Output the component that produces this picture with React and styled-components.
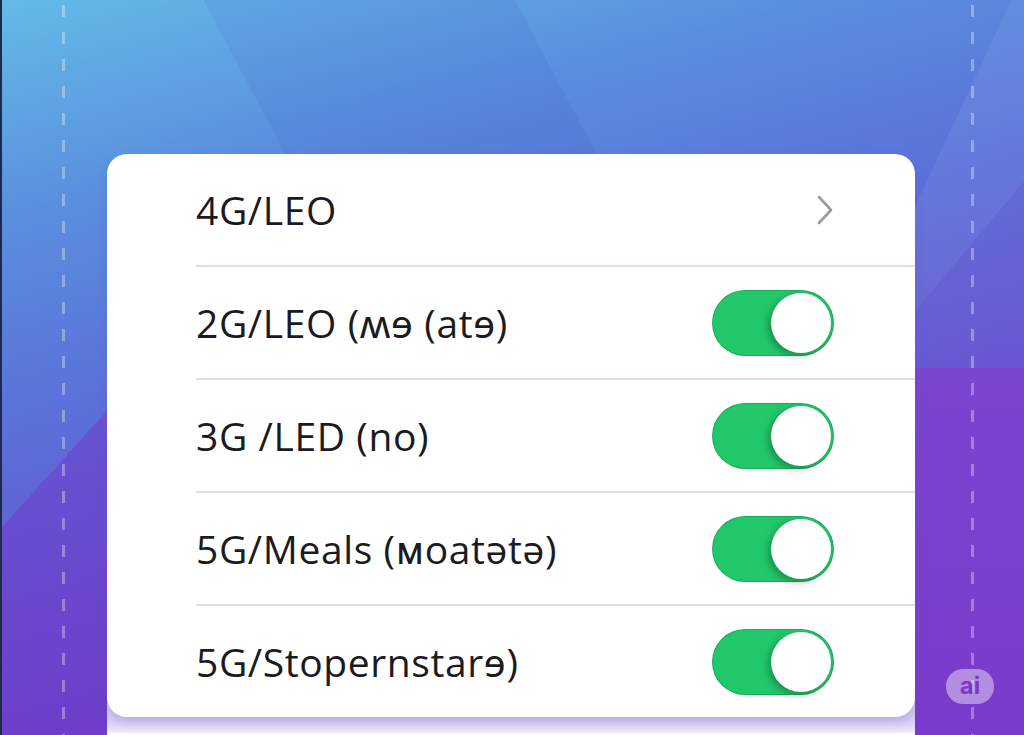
import React from 'react';
import styled, { createGlobalStyle } from 'styled-components';

const GlobalStyle = createGlobalStyle`
  html, body {
    margin: 0;
    padding: 0;
    overflow: hidden;
  }
  body {
    font-family: "Open Sans", "Noto Sans", "DejaVu Sans", sans-serif;
  }
`;

// dashed guide lines + faceted gradient all live in the page background
const Page = styled.div`
  width: 1024px;
  height: 735px;
  box-sizing: border-box;
  padding: 154px 109px 0 107px;
  display: flex;
  flex-direction: column;
  position: relative;
  overflow: hidden;
  background-color: #6360d6;
  background-origin: border-box;
  background-image:
    linear-gradient(to bottom, rgba(255, 255, 255, 0.32) 12px, transparent 12px),
    linear-gradient(to bottom, rgba(255, 255, 255, 0.32) 12px, transparent 12px),
    linear-gradient(to bottom, transparent 368px, #7a45d0 368px, #7a3acb 100%),
    linear-gradient(130deg, transparent 36%, rgba(80, 60, 200, 0.18) 36%),
    linear-gradient(132deg, transparent 62%, rgba(112, 52, 200, 0.45) 62%),
    linear-gradient(115deg, transparent 74%, rgba(255, 255, 255, 0.06) 74%),
    linear-gradient(62deg, transparent 42%, rgba(40, 40, 170, 0.07) 42%, rgba(40, 40, 170, 0.07) 64%, transparent 64%),
    linear-gradient(165deg, #63bbe7 0%, #5a8edd 22%, #5a74da 40%, #6555d2 62%, #7138c8 85%, #7630c4 100%);
  background-size:
    3px 27px,
    3px 27px,
    109px 100%,
    109px 100%,
    107px 100%,
    100% 100%,
    100% 100%,
    100% 100%;
  background-position:
    62px 5px,
    971px 5px,
    right top,
    right top,
    left top,
    0 0,
    0 0,
    0 0;
  background-repeat:
    repeat-y,
    repeat-y,
    no-repeat,
    no-repeat,
    no-repeat,
    no-repeat,
    no-repeat,
    no-repeat;
  border-left: 2px solid #1d2a4a;
`;

const Stack = styled.div`
  flex: 1;
  margin-left: -2px;
  background: linear-gradient(
    to bottom,
    transparent 540px,
    #cdc4ee 540px,
    #d8d1f3 566px,
    #ebe7fa 578px,
    #fbfaff 579px
  );
`;

const Card = styled.div`
  background: #ffffff;
  border-radius: 20px;
  box-shadow: 0 6px 10px rgba(110, 80, 200, 0.25);
  overflow: hidden;
`;

const Row = styled.div`
  display: flex;
  align-items: center;
  justify-content: space-between;
  height: 111px;
  margin-left: 89px;
  padding-right: 81px;
  border-bottom: 2px solid #dfdcec;
  ${p => p.$last && 'border-bottom: none;'}
`;

const Label = styled.span`
  font-family: "Open Sans", "Noto Sans", sans-serif;
  font-size: 39px;
  letter-spacing: 0.6px;
  color: #1b1b1f;
  white-space: pre;
`;

const Chevron = styled.svg`
  width: 18px;
  height: 30px;
`;

const Switch = styled.div`
  width: 122px;
  height: 66px;
  box-sizing: border-box;
  border-radius: 33px;
  background: ${p => (p.$on ? '#22c76a' : '#d9d9de')};
  border: 1px solid rgba(20, 150, 80, 0.6);
  display: flex;
  align-items: center;
  justify-content: ${p => (p.$on ? 'flex-end' : 'flex-start')};
  padding: 0 2px;
`;

const Knob = styled.div`
  width: 60px;
  height: 60px;
  border-radius: 50%;
  background: #ffffff;
  box-shadow: -3px 3px 7px rgba(0, 0, 0, 0.28);
`;

const AiBadge = styled.div`
  position: absolute;
  left: 944px;
  top: 669px;
  width: 48px;
  height: 35px;
  border-radius: 17px;
  background: rgba(255, 255, 255, 0.42);
  color: #7a3ac8;
  font-family: "Inter", "Noto Sans", sans-serif;
  font-weight: 700;
  font-size: 24px;
  display: flex;
  align-items: center;
  justify-content: center;
  line-height: 1;
  padding-bottom: 2px;
  box-sizing: border-box;
`;

const rows = [
  { label: '4G/LEO', kind: 'link' },
  { label: '2G/LEO (\u028Dɘ (atɘ)', kind: 'toggle' },
  { label: '3G /LED (no)', kind: 'toggle' },
  { label: '5G/Meals (\u1D0Doatətə)', kind: 'toggle' },
  { label: '5G/Stopernstarɘ)', kind: 'toggle' },
];

export default function App() {
  return (
    <>
      <GlobalStyle />
      <Page>
        <Stack>
          <Card>
            {rows.map((r, i) => (
              <Row key={i} $last={i === rows.length - 1}>
                <Label>{r.label}</Label>
                {r.kind === 'link' ? (
                  <Chevron viewBox="0 0 18 30">
                    <polyline
                      points="3,2 15,15 3,28"
                      fill="none"
                      stroke="#9b9b9e"
                      strokeWidth="2.6"
                      strokeLinecap="round"
                      strokeLinejoin="round"
                    />
                  </Chevron>
                ) : (
                  <Switch $on>
                    <Knob />
                  </Switch>
                )}
              </Row>
            ))}
          </Card>
        </Stack>
        <AiBadge>ai</AiBadge>
      </Page>
    </>
  );
}
